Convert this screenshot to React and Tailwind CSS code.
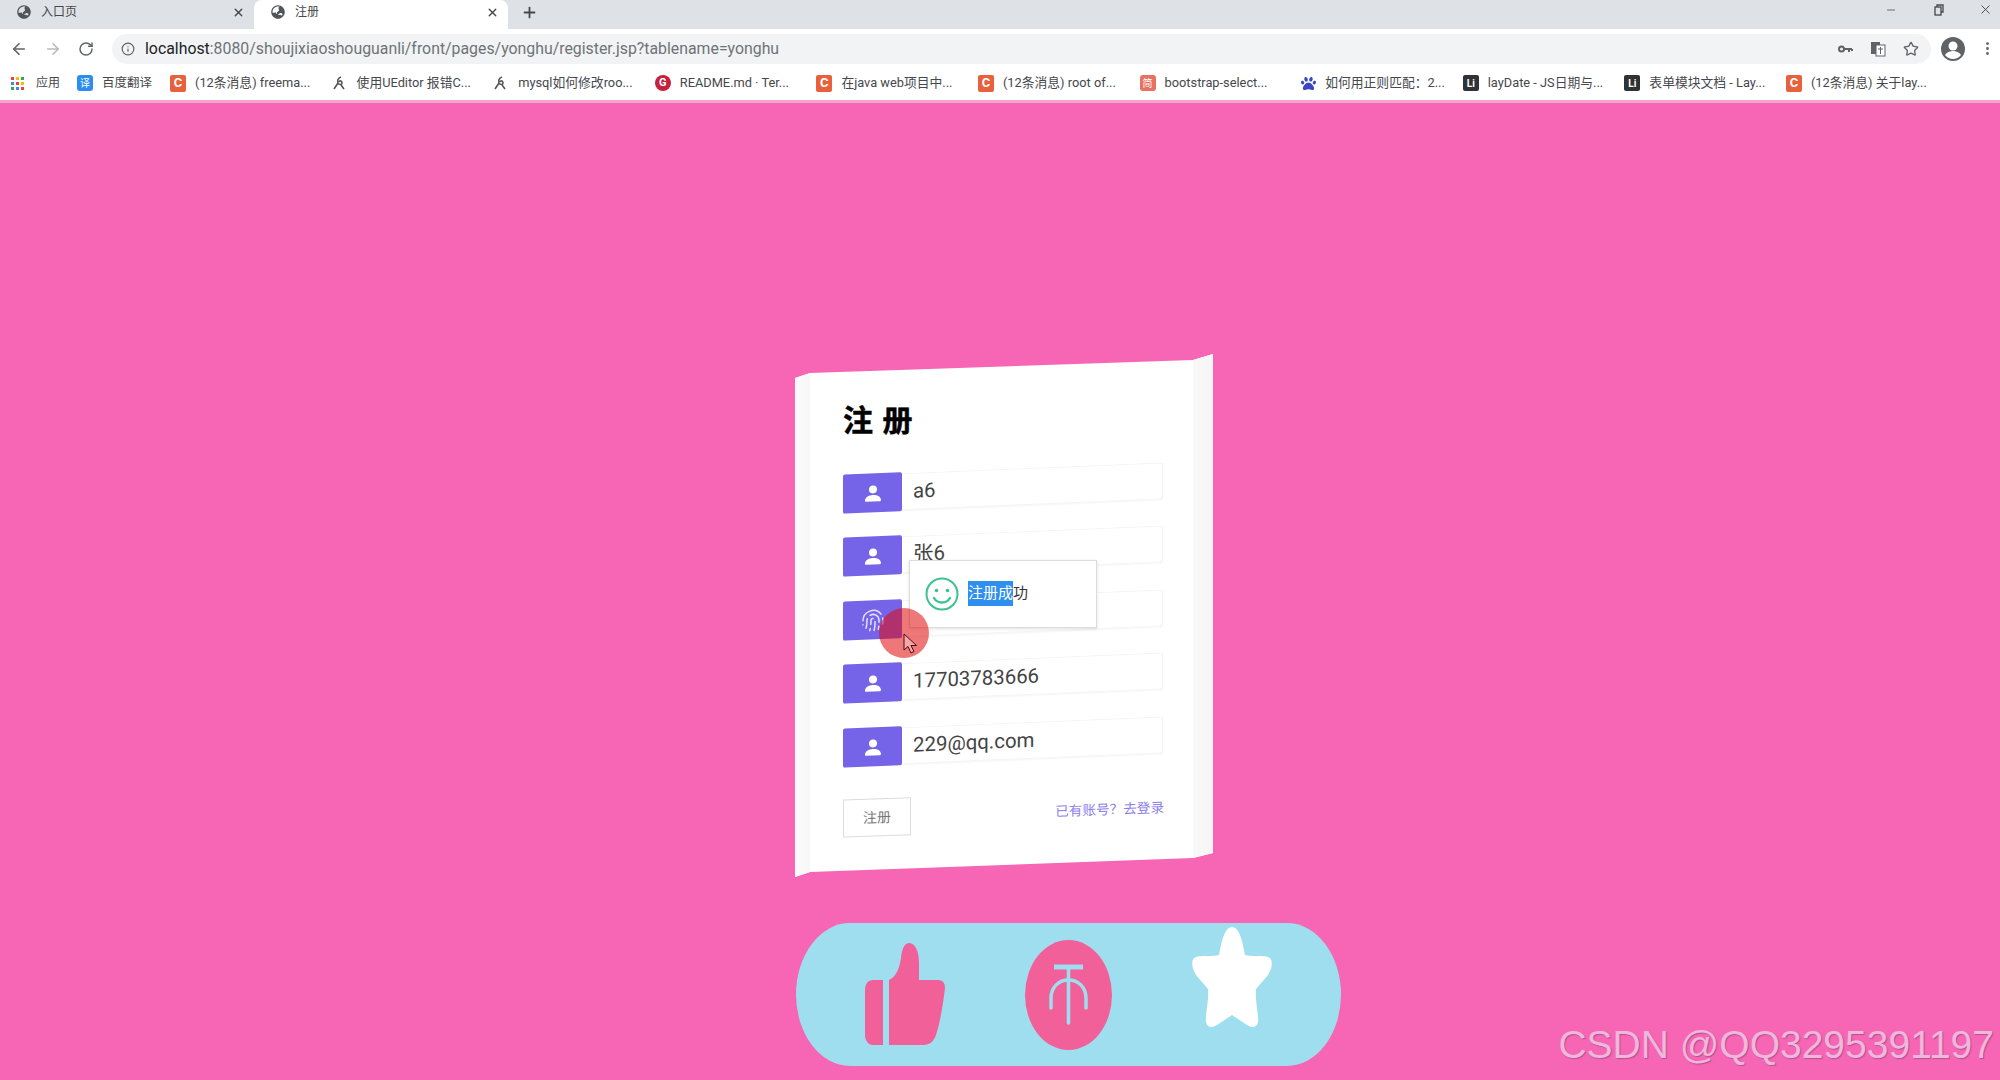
import React from "react";
import { ArrowLeft, ArrowRight, RotateCw, Info, Star, EllipsisVertical, X, Plus, Fingerprint, Minus } from "lucide-react";
import { FaGlobeAsia, FaPaw } from "react-icons/fa";

const uiFont = "font-['Roboto','Noto_Sans_CJK_SC',sans-serif]";

const bookmarks = [
  { label: "(12条消息) freema...", icon: "c" },
  { label: "使用UEditor 报错C...", icon: "bird" },
  { label: "mysql如何修改roo...", icon: "bird" },
  { label: "README.md · Ter...", icon: "g" },
  { label: "在java web项目中...", icon: "c" },
  { label: "(12条消息) root of...", icon: "c" },
  { label: "bootstrap-select...", icon: "jian" },
  { label: "如何用正则匹配：2...", icon: "paw" },
  { label: "layDate - JS日期与...", icon: "li" },
  { label: "表单模块文档 - Lay...", icon: "li" },
  { label: "(12条消息) 关于lay...", icon: "c" },
];

const rows = [
  { text: "a6", icon: "user" },
  { text: "张6", icon: "user" },
  { text: "", icon: "finger" },
  { text: "17703783666", icon: "user" },
  { text: "229@qq.com", icon: "user" },
];

const appColors = ["#ea4335", "#fbbc05", "#34a853", "#4285f4", "#ea4335", "#fbbc05", "#34a853", "#4285f4", "#ea4335"];

function Favicon({ type }) {
  if (type === "yi") return <span className="flex h-4 w-4 items-center justify-center rounded-[3px] bg-[#2d8cf0] text-[10px] text-white">译</span>;
  if (type === "c") return <span className="flex h-[17px] w-4 items-center justify-center rounded-[2px] bg-[#e8603c] text-[13px] font-bold text-white">C</span>;
  if (type === "g") return <span className="flex h-4 w-4 items-center justify-center rounded-full bg-[#c5203c] text-[11px] font-bold text-white">G</span>;
  if (type === "jian") return <span className="flex h-4 w-4 items-center justify-center rounded-[3px] bg-[#e9715f] text-[10px] text-white">简</span>;
  if (type === "li") return <span className="flex h-4 w-4 items-center justify-center rounded-[2px] bg-[#2f3237] text-[10px] font-bold text-white">Li</span>;
  if (type === "paw") return <FaPaw size={15} color="#3b46c4" />;
  return (
    <svg width="16" height="16" viewBox="0 0 16 16" fill="none" stroke="#555" strokeWidth="1.6">
      <path d="M9 2c-3 1-4 4-3 6s4 2 4 0-2-3-3-1" />
      <path d="M6 8 2 14M9 10l3 4" />
    </svg>
  );
}

function UserIcon() {
  return (
    <svg width="18" height="18" viewBox="0 0 18 18" fill="#fff">
      <circle cx="9" cy="5" r="4" />
      <path d="M1 16c0-3.500 3.500-5.500 8-5.500s8 2 8 5.500c0 .8-.4 1-1 1H2c-.6 0-1-.2-1-1Z" />
    </svg>
  );
}

function ThumbIcon() {
  return (
    <svg width="80" height="103" viewBox="0 0 80 103" fill="#f2609a">
      <path d="M8 37H18V102H8C3 102 0 97 0 92V47C0 41 3 37 8 37Z" />
      <path d="M24 37C30 34 34 28 36 15C37 5 40 0 44 0C51 0 54 10 54 20V37H73C78 37 80 40 80 45C78 62 75 80 71 92C69 98 65 102 58 102H24Z" />
    </svg>
  );
}

function ForkIcon() {
  return (
    <svg width="87" height="110" viewBox="0 0 87 110">
      <ellipse cx="43.500" cy="55" rx="43.500" ry="55" fill="#f2609a" />
      <g fill="none" stroke="#9fdeee" strokeWidth="3.500" strokeLinecap="round">
        <path d="M29 27H58" strokeWidth="5" strokeLinecap="butt" />
        <path d="M43.500 27V83" />
        <path d="M26 68V58C26 47 34 40 43.500 40C53 40 61 47 61 58V68" />
      </g>
    </svg>
  );
}

function StarIcon() {
  return (
    <svg width="80" height="100" viewBox="0 0 80 100" fill="#fff">
      <path d="M40 0C46 0 50 10 53 28C60 30 72 28 76 30C82 32 80 42 76 48L64 62C63 75 67 88 66 95C65 101 60 101 55 98L40 88L25 98C20 101 15 101 14 95C13 88 17 75 16 62L4 48C0 42-2 32 4 30C8 28 20 30 27 28C30 10 34 0 40 0Z" />
    </svg>
  );
}

function Tab({ label, active }) {
  return (
    <div className={`flex h-full w-[254px] items-center pb-[5px] ${active ? "rounded-t-lg bg-white" : "bg-[#dee1e6]"}`}>
      <span className="ml-[17px]">
        <FaGlobeAsia size={14} color="#50555a" />
      </span>
      <span className="ml-[10px] flex-1 text-[12px] text-[#45484c]">{label}</span>
      <X size={13} strokeWidth={2.500} className="mr-[9px] text-[#45484c]" />
    </div>
  );
}

function BrowserChrome() {
  return (
    <div className={`${uiFont} shrink-0`}>
      <div className="flex h-[29px] items-center bg-[#dee1e6]">
        <Tab label="入口页" />
        <Tab label="注册" active />
        <Plus size={17} strokeWidth={2.500} className="mb-[5px] ml-[13px] text-[#45484c]" />
        <div className="ml-auto flex items-center pr-[7px] pb-[10px] text-[#45484c]">
          <Minus size={12} strokeWidth={1.500} />
          <svg width="12" height="12" viewBox="0 0 12 12" fill="none" stroke="#45484c" strokeWidth="1.300" className="ml-[36px]">
            <rect x="2" y="3" width="6" height="8" />
            <path d="M4 3V1H10V8H8" />
          </svg>
          <X size={15} strokeWidth={1.500} className="ml-[33px]" />
        </div>
      </div>
      <div className="flex h-[39px] items-center bg-white">
        <ArrowLeft size={18} strokeWidth={2.200} className="ml-[10px] text-[#5f6368]" />
        <ArrowRight size={18} strokeWidth={2.200} className="ml-[16px] text-[#b8babd]" />
        <RotateCw size={16} strokeWidth={2.200} className="ml-[16px] text-[#5f6368]" />
        <div className="ml-[18px] flex h-[30px] w-[1819px] items-center rounded-full bg-[#f1f3f4]">
          <Info size={14} className="ml-[9px] text-[#5f6368]" />
          <span className="ml-[10px] text-[15.850px] whitespace-nowrap text-[#6f7377]">
            <span className="text-[#202124]">localhost</span>:8080/shoujixiaoshouguanli/front/pages/yonghu/register.jsp?tablename=yonghu
          </span>
          <div className="ml-auto flex items-center gap-[17px] pr-[12px] text-[#5f6368]">
            <svg width="16" height="16" viewBox="0 0 16 16" fill="none" stroke="#5f6368" strokeWidth="2">
              <circle cx="4.500" cy="8" r="2.500" />
              <path d="M7 8h8M12 8v3M15 8v2" />
            </svg>
            <svg width="16" height="16" viewBox="0 0 16 16">
              <rect x="1" y="1" width="9" height="12" fill="#5f6368" />
              <rect x="6" y="4" width="9" height="11" fill="#fff" stroke="#5f6368" />
              <path d="M8 8h5M10.500 6v7" stroke="#5f6368" />
            </svg>
            <Star size={16} strokeWidth={2} />
          </div>
        </div>
        <svg width="24" height="24" viewBox="0 0 24 24" className="ml-[10px]">
          <circle cx="12" cy="12" r="12" fill="#5f6368" />
          <circle cx="12" cy="9" r="4.500" fill="#fff" />
          <path d="M4 18c2-3 5-4 8-4s6 1 8 4c-2 2.500-5 4-8 4s-6-1.500-8-4Z" fill="#fff" />
        </svg>
        <EllipsisVertical size={17} className="ml-[14px] text-[#5f6368]" />
      </div>
      <div className="flex h-[32px] items-center bg-white pb-[2px] text-[12.800px] text-[#45484c]">
        <div className="ml-[11px] grid grid-cols-[3px_3px_3px] gap-[2px]">
          {appColors.map((c, i) => (
            <span key={i} className="h-[3px] w-[3px]" style={{ backgroundColor: c }} />
          ))}
        </div>
        <span className="ml-[12px] w-[24px] whitespace-nowrap text-[12px]">应用</span>
        <div className="ml-[17px] flex w-[93px] items-center gap-[9px] whitespace-nowrap">
          <Favicon type="yi" />
          <span className="text-[12.500px]">百度翻译</span>
        </div>
        <div className="flex">
          {bookmarks.map((b, i) => (
            <div key={i} className="flex w-[161.600px] items-center gap-[9px] whitespace-nowrap">
              <Favicon type={b.icon} />
              <span>{b.label}</span>
            </div>
          ))}
        </div>
      </div>
      <div className="h-[3px] bg-[#f5a3d0]" />
    </div>
  );
}

function FormRow({ row }) {
  return (
    <div className="flex h-[37px] w-[320px] skew-y-[-2.400deg] items-stretch">
      <div className="-my-px flex w-[59px] items-center justify-center rounded-[2px] bg-[#7563e8]">
        {row.icon === "user" ? <UserIcon /> : <Fingerprint size={24} strokeWidth={1.500} className="text-[#e5e0fb]" />}
      </div>
      <div className="flex flex-1 items-center rounded-r-[3px] border border-l-0 border-[#f4f4f4] bg-white pl-[11px] text-[20.400px] text-[#444] shadow-[0_1px_2px_rgba(0,0,0,0.04)]">
        {row.text}
      </div>
    </div>
  );
}

function RegisterCard() {
  return (
    <div className={`${uiFont} relative ml-2 mt-[251px] h-[523px] w-[418px] shrink-0`}>
      <div className="flex h-full w-full bg-white [clip-path:polygon(0_24px,15px_19px,398px_6px,418px_0,418px_499px,398px_504px,15px_518px,0_523px)]">
        <div className="w-[15px] shrink-0 bg-gradient-to-r from-[#fbfbfb] to-[#f7f7f7]" />
        <div className="flex-1 pl-[33px]">
          <h1 className="pt-[52px] text-[30px] leading-[30px] font-bold tracking-[1px] text-black [-webkit-text-stroke:0.5px_black]">注 册</h1>
          <div className="mt-[32.500px] flex flex-col gap-[26.500px]">
            {rows.map((row, i) => (
              <FormRow key={i} row={row} />
            ))}
          </div>
          <div className="mt-[34px] flex h-[38px] w-[321px] skew-y-[-2deg] items-center justify-between">
            <button className="h-[38px] w-[68px] border border-[#dcdcdc] bg-white text-[14px] text-[#777]">注册</button>
            <a className="text-[13.600px] text-[#8d82e8]">已有账号？去登录</a>
          </div>
        </div>
        <div className="w-[20px] shrink-0 bg-gradient-to-r from-[#f8f8f8] to-[#f6f6f6]" />
      </div>

      <div className="absolute top-[206px] left-[114px] flex h-[68px] w-[188px] items-center border border-[#dcdcdc] bg-white pl-[15px] shadow-[0_1px_3px_rgba(0,0,0,0.12)]">
        <svg width="34" height="34" viewBox="0 0 34 34" fill="none" stroke="#3cc28e" strokeWidth="2">
          <circle cx="17" cy="17" r="15.500" />
          <circle cx="11.500" cy="13.500" r="1.800" fill="#3cc28e" stroke="none" />
          <circle cx="22.500" cy="13.500" r="1.800" fill="#3cc28e" stroke="none" />
          <path d="M9 21c2 3.500 5 4.500 8 4.500s6-1 8-4.500" strokeWidth="2.400" strokeLinecap="round" />
        </svg>
        <span className="ml-[9px] -mt-[2px] text-[15px] leading-[25px] text-[#333]">
          <span className="inline-block h-[25px] bg-[#2f8fef] text-white">注册成</span>功
        </span>
      </div>

      <div className="absolute top-[254px] left-[84px] h-[50px] w-[50px] rounded-full bg-[rgba(224,9,9,0.55)]" />
      <svg width="15" height="22" viewBox="0 0 15 22" className="absolute top-[279px] left-[108px]">
        <path d="M1 1V17L5 13.500L8 20L11 18.500L8 12.500H13.500Z" fill="#f8a6a6" stroke="#4a0b14" strokeWidth="1" />
      </svg>
    </div>
  );
}

export default function App() {
  return (
    <div className="flex h-[1080px] w-[2000px] flex-col overflow-hidden bg-[#f666b4]">
      <BrowserChrome />
      <main className="relative flex flex-1 flex-col items-center">
        <RegisterCard />
        <div className="ml-[137px] mt-[46px] flex h-[143px] w-[545px] shrink-0 items-start rounded-[54px/71.500px] bg-[#9fdeee] pl-[69px]">
          <span className="mt-[20px]"><ThumbIcon /></span>
          <span className="ml-[80px] mt-[17px]"><ForkIcon /></span>
          <span className="ml-[80px] mt-[4px]"><StarIcon /></span>
        </div>
        <span className="absolute top-[920px] right-[6px] font-['Liberation_Sans',sans-serif] text-[39px] leading-[44px] whitespace-nowrap text-[#eeb7dc] [text-shadow:1px_1px_1px_rgba(120,60,110,0.5)]">
          CSDN @QQ3295391197
        </span>
      </main>
    </div>
  );
}
